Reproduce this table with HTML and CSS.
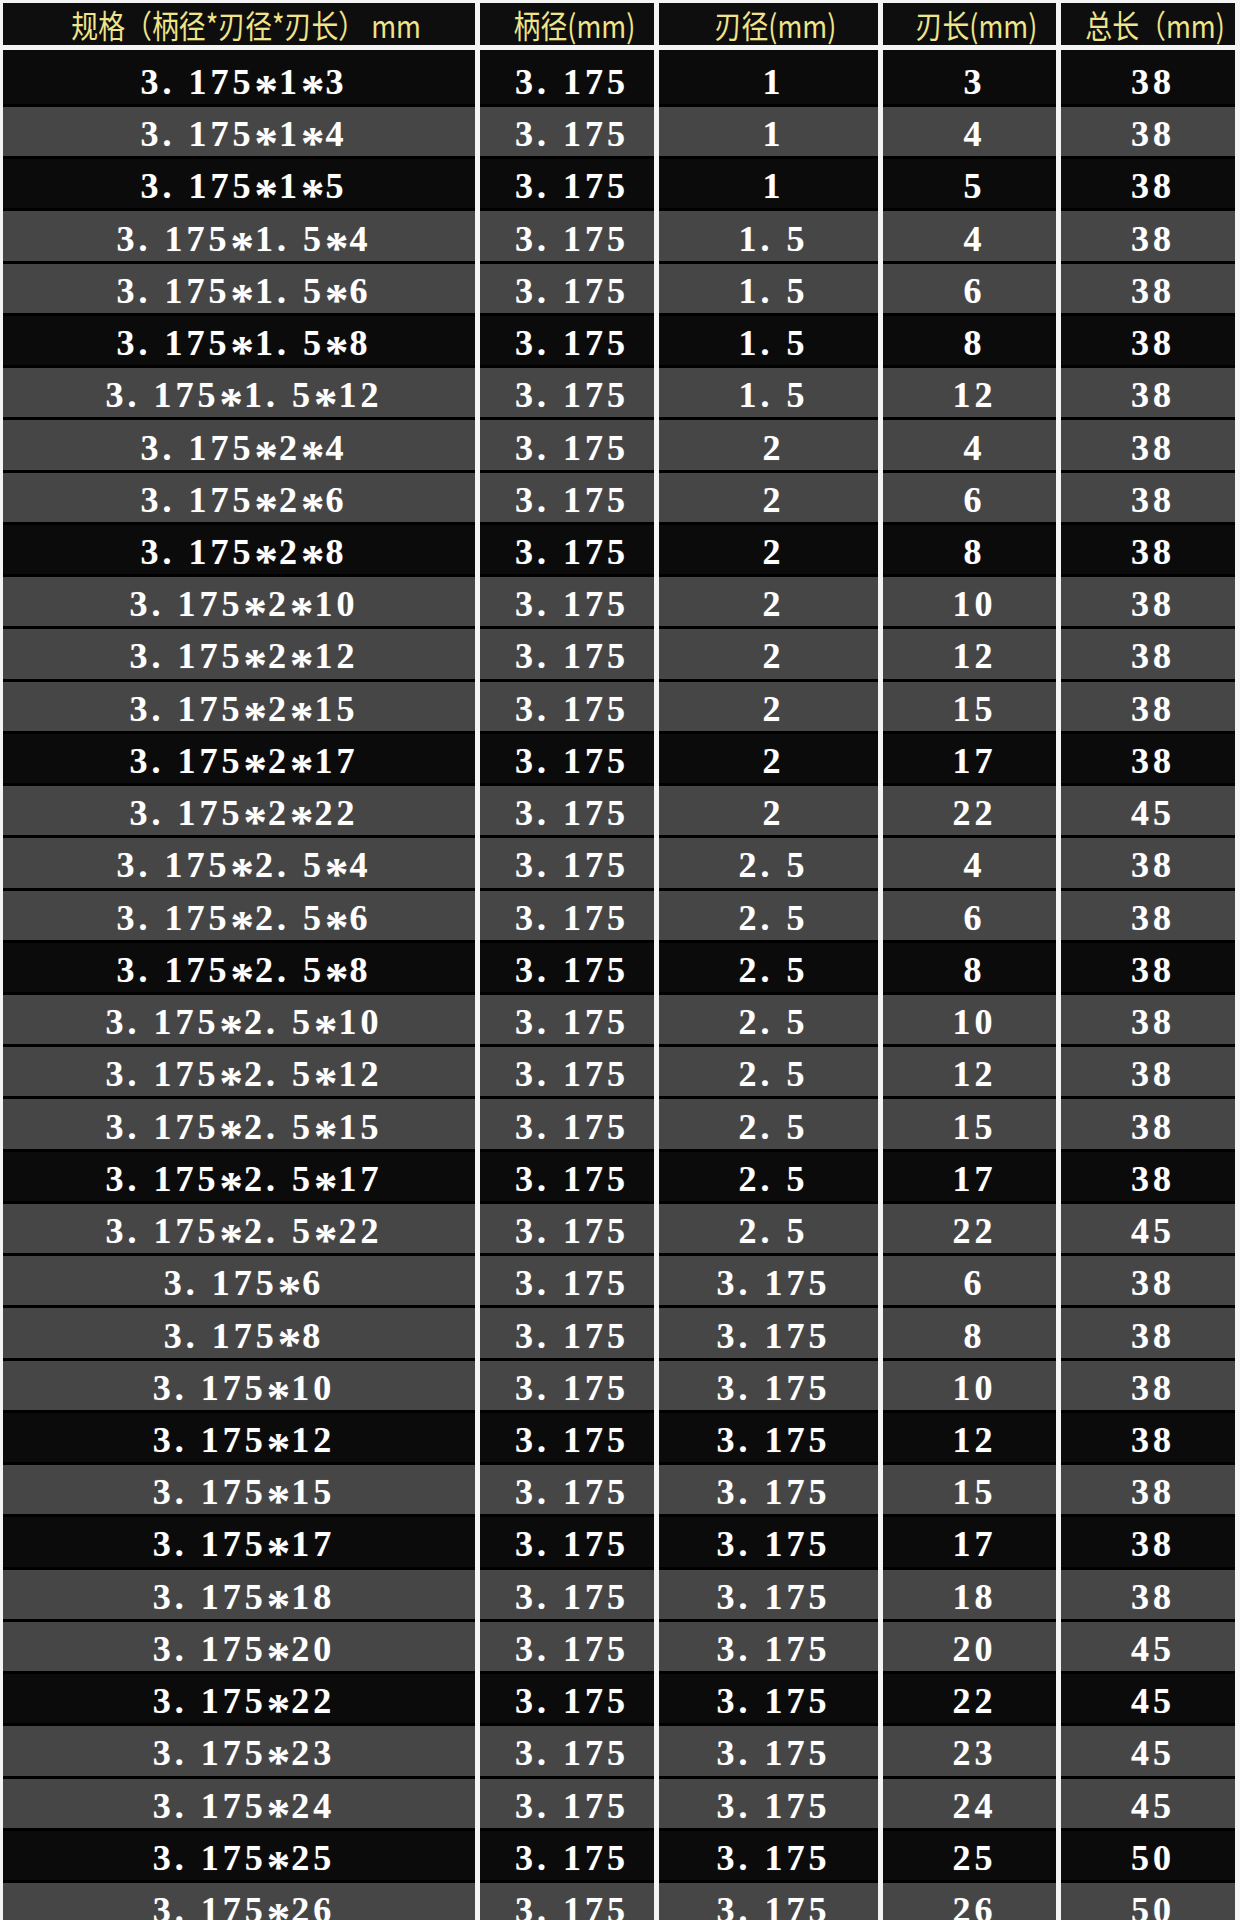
FILE: index.html
```html
<!DOCTYPE html>
<html lang="zh">
<head>
<meta charset="utf-8">
<title>规格表</title>
<link rel="stylesheet" href="styles.css">
</head>
<body>
<div class="sheet">
  <div class="row head">
    <div class="cell"><span class="ht">规格（柄径*刃径*刃长） mm</span></div>
    <div class="cell"><span class="ht">柄径(mm)</span></div>
    <div class="cell"><span class="ht">刃径(mm)</span></div>
    <div class="cell"><span class="ht">刃长(mm)</span></div>
    <div class="cell"><span class="ht">总长（mm)</span></div>
  </div>
  <div class="body">
    <div class="row dark first"><div class="cell">3. 175<span class="x">*</span>1<span class="x">*</span>3</div><div class="cell">3. 175</div><div class="cell">1</div><div class="cell">3</div><div class="cell">38</div></div>
    <div class="row gray"><div class="cell">3. 175<span class="x">*</span>1<span class="x">*</span>4</div><div class="cell">3. 175</div><div class="cell">1</div><div class="cell">4</div><div class="cell">38</div></div>
    <div class="row dark"><div class="cell">3. 175<span class="x">*</span>1<span class="x">*</span>5</div><div class="cell">3. 175</div><div class="cell">1</div><div class="cell">5</div><div class="cell">38</div></div>
    <div class="row gray"><div class="cell">3. 175<span class="x">*</span>1. 5<span class="x">*</span>4</div><div class="cell">3. 175</div><div class="cell">1. 5</div><div class="cell">4</div><div class="cell">38</div></div>
    <div class="row gray"><div class="cell">3. 175<span class="x">*</span>1. 5<span class="x">*</span>6</div><div class="cell">3. 175</div><div class="cell">1. 5</div><div class="cell">6</div><div class="cell">38</div></div>
    <div class="row dark"><div class="cell">3. 175<span class="x">*</span>1. 5<span class="x">*</span>8</div><div class="cell">3. 175</div><div class="cell">1. 5</div><div class="cell">8</div><div class="cell">38</div></div>
    <div class="row gray"><div class="cell">3. 175<span class="x">*</span>1. 5<span class="x">*</span>12</div><div class="cell">3. 175</div><div class="cell">1. 5</div><div class="cell">12</div><div class="cell">38</div></div>
    <div class="row gray"><div class="cell">3. 175<span class="x">*</span>2<span class="x">*</span>4</div><div class="cell">3. 175</div><div class="cell">2</div><div class="cell">4</div><div class="cell">38</div></div>
    <div class="row gray"><div class="cell">3. 175<span class="x">*</span>2<span class="x">*</span>6</div><div class="cell">3. 175</div><div class="cell">2</div><div class="cell">6</div><div class="cell">38</div></div>
    <div class="row dark"><div class="cell">3. 175<span class="x">*</span>2<span class="x">*</span>8</div><div class="cell">3. 175</div><div class="cell">2</div><div class="cell">8</div><div class="cell">38</div></div>
    <div class="row gray"><div class="cell">3. 175<span class="x">*</span>2<span class="x">*</span>10</div><div class="cell">3. 175</div><div class="cell">2</div><div class="cell">10</div><div class="cell">38</div></div>
    <div class="row gray"><div class="cell">3. 175<span class="x">*</span>2<span class="x">*</span>12</div><div class="cell">3. 175</div><div class="cell">2</div><div class="cell">12</div><div class="cell">38</div></div>
    <div class="row gray"><div class="cell">3. 175<span class="x">*</span>2<span class="x">*</span>15</div><div class="cell">3. 175</div><div class="cell">2</div><div class="cell">15</div><div class="cell">38</div></div>
    <div class="row dark"><div class="cell">3. 175<span class="x">*</span>2<span class="x">*</span>17</div><div class="cell">3. 175</div><div class="cell">2</div><div class="cell">17</div><div class="cell">38</div></div>
    <div class="row gray"><div class="cell">3. 175<span class="x">*</span>2<span class="x">*</span>22</div><div class="cell">3. 175</div><div class="cell">2</div><div class="cell">22</div><div class="cell">45</div></div>
    <div class="row gray"><div class="cell">3. 175<span class="x">*</span>2. 5<span class="x">*</span>4</div><div class="cell">3. 175</div><div class="cell">2. 5</div><div class="cell">4</div><div class="cell">38</div></div>
    <div class="row gray"><div class="cell">3. 175<span class="x">*</span>2. 5<span class="x">*</span>6</div><div class="cell">3. 175</div><div class="cell">2. 5</div><div class="cell">6</div><div class="cell">38</div></div>
    <div class="row dark"><div class="cell">3. 175<span class="x">*</span>2. 5<span class="x">*</span>8</div><div class="cell">3. 175</div><div class="cell">2. 5</div><div class="cell">8</div><div class="cell">38</div></div>
    <div class="row gray"><div class="cell">3. 175<span class="x">*</span>2. 5<span class="x">*</span>10</div><div class="cell">3. 175</div><div class="cell">2. 5</div><div class="cell">10</div><div class="cell">38</div></div>
    <div class="row gray"><div class="cell">3. 175<span class="x">*</span>2. 5<span class="x">*</span>12</div><div class="cell">3. 175</div><div class="cell">2. 5</div><div class="cell">12</div><div class="cell">38</div></div>
    <div class="row gray"><div class="cell">3. 175<span class="x">*</span>2. 5<span class="x">*</span>15</div><div class="cell">3. 175</div><div class="cell">2. 5</div><div class="cell">15</div><div class="cell">38</div></div>
    <div class="row dark"><div class="cell">3. 175<span class="x">*</span>2. 5<span class="x">*</span>17</div><div class="cell">3. 175</div><div class="cell">2. 5</div><div class="cell">17</div><div class="cell">38</div></div>
    <div class="row gray"><div class="cell">3. 175<span class="x">*</span>2. 5<span class="x">*</span>22</div><div class="cell">3. 175</div><div class="cell">2. 5</div><div class="cell">22</div><div class="cell">45</div></div>
    <div class="row gray"><div class="cell">3. 175<span class="x">*</span>6</div><div class="cell">3. 175</div><div class="cell">3. 175</div><div class="cell">6</div><div class="cell">38</div></div>
    <div class="row gray"><div class="cell">3. 175<span class="x">*</span>8</div><div class="cell">3. 175</div><div class="cell">3. 175</div><div class="cell">8</div><div class="cell">38</div></div>
    <div class="row gray"><div class="cell">3. 175<span class="x">*</span>10</div><div class="cell">3. 175</div><div class="cell">3. 175</div><div class="cell">10</div><div class="cell">38</div></div>
    <div class="row dark"><div class="cell">3. 175<span class="x">*</span>12</div><div class="cell">3. 175</div><div class="cell">3. 175</div><div class="cell">12</div><div class="cell">38</div></div>
    <div class="row gray"><div class="cell">3. 175<span class="x">*</span>15</div><div class="cell">3. 175</div><div class="cell">3. 175</div><div class="cell">15</div><div class="cell">38</div></div>
    <div class="row dark"><div class="cell">3. 175<span class="x">*</span>17</div><div class="cell">3. 175</div><div class="cell">3. 175</div><div class="cell">17</div><div class="cell">38</div></div>
    <div class="row gray"><div class="cell">3. 175<span class="x">*</span>18</div><div class="cell">3. 175</div><div class="cell">3. 175</div><div class="cell">18</div><div class="cell">38</div></div>
    <div class="row gray"><div class="cell">3. 175<span class="x">*</span>20</div><div class="cell">3. 175</div><div class="cell">3. 175</div><div class="cell">20</div><div class="cell">45</div></div>
    <div class="row dark"><div class="cell">3. 175<span class="x">*</span>22</div><div class="cell">3. 175</div><div class="cell">3. 175</div><div class="cell">22</div><div class="cell">45</div></div>
    <div class="row gray"><div class="cell">3. 175<span class="x">*</span>23</div><div class="cell">3. 175</div><div class="cell">3. 175</div><div class="cell">23</div><div class="cell">45</div></div>
    <div class="row gray"><div class="cell">3. 175<span class="x">*</span>24</div><div class="cell">3. 175</div><div class="cell">3. 175</div><div class="cell">24</div><div class="cell">45</div></div>
    <div class="row dark"><div class="cell">3. 175<span class="x">*</span>25</div><div class="cell">3. 175</div><div class="cell">3. 175</div><div class="cell">25</div><div class="cell">50</div></div>
    <div class="row gray"><div class="cell">3. 175<span class="x">*</span>26</div><div class="cell">3. 175</div><div class="cell">3. 175</div><div class="cell">26</div><div class="cell">50</div></div>
  </div>
</div>
</body>
</html>
```
FILE: styles.css
```css
* { box-sizing: border-box; }
html, body {
  margin: 0;
  padding: 0;
  background: #ffffff;
}
.sheet {
  width: 1240px;
  padding: 3px 5px 0 3px;
  background: #f4f4f4;
  display: flex;
  flex-direction: column;
  gap: 5px;
}
.row {
  display: grid;
  grid-template-columns: 472px 174px 219px 173px 174px;
  column-gap: 5px;
}
.head .cell {
  height: 42px;
  padding-left: 14px;
  background: #0e0e0e;
  display: flex;
  align-items: center;
  justify-content: center;
  color: #efe48a;
  font-family: "Noto Sans CJK SC", "Noto Sans", sans-serif;
  font-size: 32px;
  white-space: nowrap;
}
.ht {
  display: inline-block;
  transform: scaleX(0.84);
  line-height: 1;
}
.body {
  display: flex;
  flex-direction: column;
}
.body .cell {
  height: 52.24px;
  padding-top: 5px;
  padding-left: 10px;
  border-bottom: 3px solid #000;
  display: flex;
  align-items: center;
  justify-content: center;
  color: #ffffff;
  font-family: "Liberation Serif", "Times New Roman", serif;
  font-weight: bold;
  font-size: 36px;
  letter-spacing: 4px;
  white-space: nowrap;
  text-shadow: 0 0 1px rgba(255, 255, 255, 0.35);
}
.x {
  position: relative;
  top: 0.2em;
  font-size: 1.3em;
  line-height: 0.7;
  letter-spacing: 1px;
}
.body .first .cell {
  height: 57px;
  padding-top: 10px;
}
.dark .cell { background: #0b0b0b; }
.gray .cell { background: #464646; }
```
